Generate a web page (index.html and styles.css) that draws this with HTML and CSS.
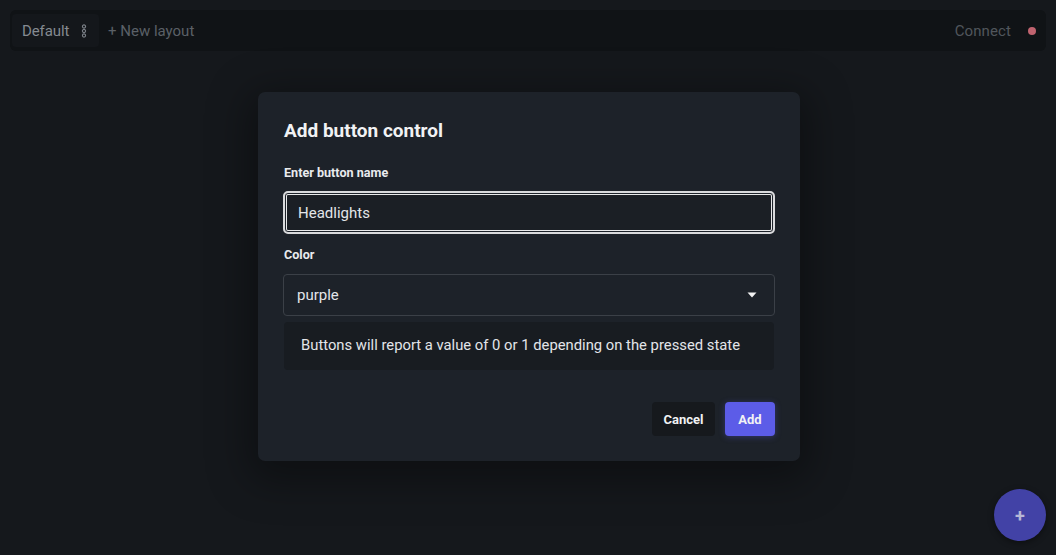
FILE: index.html
```html
<!DOCTYPE html>
<html>
<head>
<meta charset="utf-8">
<link rel="stylesheet" href="styles.css">
</head>
<body>
<div class="app">
  <header class="topbar">
    <div class="tabs">
      <div class="tab">
        <span class="tab-name">Default</span>
        <svg class="kebab" width="6" height="14" viewBox="0 0 6 14"><circle cx="3" cy="2.5" r="1.6" fill="none" stroke="#7c8188" stroke-width="1.1"/><circle cx="3" cy="7" r="1.6" fill="none" stroke="#7c8188" stroke-width="1.1"/><circle cx="3" cy="11.5" r="1.6" fill="none" stroke="#7c8188" stroke-width="1.1"/></svg>
      </div>
      <span class="new-layout">+ New layout</span>
    </div>
    <div class="conn">
      <span class="conn-text">Connect</span>
      <span class="dot"></span>
    </div>
  </header>
  <button class="fab">+</button>
</div>
<div class="overlay">
  <div class="modal">
    <h2 class="title">Add button control</h2>
    <label class="label l1">Enter button name</label>
    <div class="input focused">Headlights</div>
    <label class="label l2">Color</label>
    <div class="input select">
      <span>purple</span>
      <svg width="10" height="6" viewBox="0 0 10 6"><path d="M0.5 0.5 L9.5 0.5 L5 5.5 Z" fill="#f2f2f2"/></svg>
    </div>
    <div class="info">Buttons will report a value of 0 or 1 depending on the pressed state</div>
    <div class="actions">
      <button class="btn cancel">Cancel</button>
      <button class="btn add">Add</button>
    </div>
  </div>
</div>
</body>
</html>
```
FILE: styles.css
```css
* { box-sizing: border-box; }
html, body { margin: 0; height: 100%; }
body {
  background: #15181c;
  font-family: Roboto, "Liberation Sans", sans-serif;
  overflow: hidden;
}
.app { position: relative; height: 555px; padding: 10px; }
.topbar {
  height: 41px;
  background: #101316;
  border-radius: 6px;
  display: flex;
  align-items: center;
  justify-content: space-between;
  padding: 0 10px 0 2px;
}
.tabs { display: flex; align-items: center; height: 100%; }
.tab {
  display: flex;
  align-items: center;
  height: 33px;
  width: 87px;
  background: #14171b;
  border-radius: 4px;
  padding: 0 0 0 10px;
}
.tab-name { color: #858a91; font-size: 15px; letter-spacing: -0.1px; }
.kebab { margin-left: 12px; }
.new-layout { color: #5b6067; font-size: 15px; margin-left: 9px; }
.conn { display: flex; align-items: center; }
.conn-text { color: #51565c; font-size: 15px; letter-spacing: 0.1px; }
.dot {
  width: 8px; height: 8px; border-radius: 50%;
  background: #c0636f;
  margin-left: 17px;
}
.fab {
  position: absolute;
  right: 10px;
  bottom: 14px;
  width: 52px; height: 52px;
  border-radius: 50%;
  border: none;
  background: #4242a6;
  color: #b7b8d6;
  font-size: 18px;
  font-weight: 700;
  font-family: Roboto, sans-serif;
  box-shadow: 0 2px 6px rgba(0,0,0,0.4);
}
.overlay {
  position: absolute;
  inset: 0;
  display: flex;
  justify-content: center;
  align-items: flex-start;
  padding: 92px 0 0 2px;
}
.modal {
  width: 542px;
  background: #1d2229;
  border-radius: 7px;
  padding: 25px 25px 25px 25px;
  display: flex;
  flex-direction: column;
  box-shadow: 0 10px 40px 10px rgba(0,0,0,0.35);
}
.title {
  margin: 0;
  font-size: 19px;
  font-weight: 700;
  line-height: 28px;
  color: #f1f2f4;
  padding-left: 1px;
}
.label {
  font-size: 12.6px;
  font-weight: 700;
  color: #e9ebee;
  line-height: 18px;
  padding-left: 1px;
}
.l1 { margin-top: 19px; }
.l2 { margin-top: 12px; }
.input {
  margin-top: 9px;
  height: 43px;
  border-radius: 5px;
  display: flex;
  align-items: center;
  padding: 0 13px;
  font-size: 15px;
  color: #e3e5e9;
}
.focused {
  border: 2px solid #d9dadc;
  box-shadow: inset 0 0 0 1px #1d2229, inset 0 0 0 2px #e8e9ea;
  background: #1b1f25;
}
.select {
  margin-top: 10px;
  height: 42px;
  border: 1px solid #3b4047;
  border-radius: 4px;
  justify-content: space-between;
  padding: 0 17px 0 13px;
}
.info {
  margin: 6px 1px 0;
  height: 48px;
  background: #181c21;
  border-radius: 4px;
  display: flex;
  align-items: center;
  padding: 0 17px 3px;
  font-size: 14.8px;
  color: #e3e5e9;
}
.actions {
  display: flex;
  justify-content: flex-end;
  gap: 10px;
  margin-top: 32px;
}
.btn {
  border: none;
  height: 34px;
  border-radius: 4px;
  font-family: Roboto, sans-serif;
  font-size: 13px;
  font-weight: 700;
  color: #f1f2f4;
}
.cancel { width: 63px; background: #16191d; }
.add { width: 50px; background: #5c5ce8; box-shadow: 0 1px 6px rgba(92,92,232,0.35); }
```
